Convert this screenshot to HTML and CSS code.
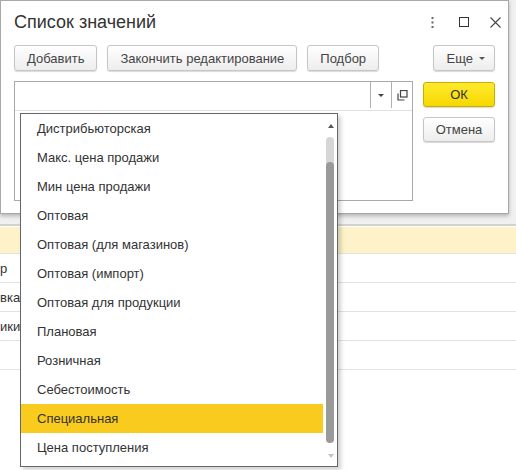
FILE: index.html
```html
<!DOCTYPE html>
<html lang="ru">
<head>
  <meta charset="UTF-8" />
  <meta name="viewport" content="width=device-width, initial-scale=1.0"/>
  <title>Список значений</title>
  <link rel="stylesheet" href="styles.css">
</head>
<body>

  <!-- Форма под диалогом -->
  <div class="form-back">
    <div class="form-head"></div>
    <div class="form-row form-row-current"><div class="form-cell"></div></div>
    <div class="form-row"><div class="form-cell cell-short">р</div></div>
    <div class="form-row"><div class="form-cell">вка</div></div>
    <div class="form-row"><div class="form-cell">ики</div></div>
    <div class="form-row"><div class="form-cell"></div></div>
  </div>

  <!-- Диалог -->
  <div class="dialog">
    <div class="dialog-title">
      <h1>Список значений</h1>
      <div class="title-icons">
        <svg class="ico-dots" width="3" height="11" viewBox="0 0 3 11">
          <rect x="0.5" y="0" width="2" height="2" fill="#666"/>
          <rect x="0.5" y="4.5" width="2" height="2" fill="#666"/>
          <rect x="0.5" y="9" width="2" height="2" fill="#666"/>
        </svg>
        <span class="ico-max"></span>
        <svg class="ico-close" width="11" height="11" viewBox="0 0 11 11">
          <path d="M0.5 0.5 L10.5 10.5 M10.5 0.5 L0.5 10.5" stroke="#444" stroke-width="1.1" fill="none"/>
        </svg>
      </div>
    </div>

    <div class="toolbar">
      <button class="btn">Добавить</button>
      <button class="btn">Закончить редактирование</button>
      <button class="btn">Подбор</button>
      <button class="btn btn-more">Еще <span class="caret"></span></button>
    </div>

    <div class="dialog-body">
      <div class="values">
        <div class="edit-row">
          <div class="edit-input"></div>
          <div class="edit-btn"><span class="caret caret-dark"></span></div>
          <div class="edit-btn">
            <svg width="11" height="11" viewBox="0 0 11 11">
              <rect x="3.5" y="0.5" width="6.5" height="6.5" fill="none" stroke="#444" stroke-width="1.2"/>
              <path d="M1 3.5 V10 H7.5" fill="none" stroke="#444" stroke-width="1.2"/>
            </svg>
          </div>
        </div>
      </div>
      <div class="side">
        <button class="btn btn-ok">ОК</button>
        <button class="btn btn-side">Отмена</button>
      </div>
    </div>
  </div>

  <!-- Выпадающий список -->
  <div class="dropdown">
    <ul class="dropdown-list">
      <li>Дистрибьюторская</li>
      <li>Макс. цена продажи</li>
      <li>Мин цена продажи</li>
      <li>Оптовая</li>
      <li>Оптовая (для магазинов)</li>
      <li>Оптовая (импорт)</li>
      <li>Оптовая для продукции</li>
      <li>Плановая</li>
      <li>Розничная</li>
      <li>Себестоимость</li>
      <li class="selected">Специальная</li>
      <li>Цена поступления</li>
    </ul>
    <div class="scroll">
      <div class="scroll-up"><span class="arrow-up"></span></div>
      <div class="scroll-track"><div class="scroll-thumb"></div></div>
      <div class="scroll-down"><span class="arrow-down"></span></div>
    </div>
  </div>

</body>
</html>
```

FILE: styles.css
```css
body {
  margin: 0;
  width: 516px;
  height: 470px;
  overflow: hidden;
  position: relative;
  font-family: "Liberation Sans", Arial, sans-serif;
  font-size: 13px;
  color: #333;
  background-color: #fff;
}

/* Форма под диалогом */
.form-head {
  height: 224px;
  background-color: #f0f0f0;
  border-bottom: 2px solid #d2d2d2;
}

.form-row {
  height: 28px;
  border-bottom: 1px solid #e2e2e2;
  display: flex;
  align-items: center;
}

.form-row-current {
  height: 26px;
  border-top: 1px solid #fff;
  background-color: #fdf2c8;
}

.form-cell {
  white-space: nowrap;
}

.cell-short {
  padding-left: 0;
}

/* Диалог */
.dialog {
  position: absolute;
  top: 0;
  left: 0;
  width: 481px;
  padding: 0 13px 12px 13px;
  background-color: #fff;
  border: 1px solid #a8a8a8;
  box-shadow: 0 2px 4px rgba(0,0,0,0.25);
}

.dialog-title {
  display: flex;
  align-items: center;
  height: 22px;
  padding-top: 10px;
}

.dialog-title h1 {
  margin: 0;
  font-size: 18px;
  line-height: 22px;
  font-weight: normal;
  color: #333;
}

.title-icons {
  margin-left: auto;
  margin-right: -6px;
  display: flex;
  align-items: center;
}

.ico-dots {
  margin-right: 25px;
}

.ico-max {
  width: 8px;
  height: 8px;
  border: 1px solid #333;
  margin-right: 21px;
}

.toolbar {
  display: flex;
  gap: 10px;
  margin-top: 12px;
}

.btn {
  height: 26px;
  padding: 0 12px;
  font-family: inherit;
  font-size: 13px;
  color: #444;
  background: linear-gradient(#fff, #ededed);
  border: 1px solid #c6c6c6;
  border-radius: 3px;
  box-shadow: 0 1px 1px rgba(0,0,0,0.15);
  cursor: pointer;
}

.btn-more {
  margin-left: auto;
  display: flex;
  align-items: center;
  gap: 6px;
  padding: 0 9px 0 13px;
}

.caret {
  display: inline-block;
  width: 0;
  height: 0;
  border-left: 3px solid transparent;
  border-right: 3px solid transparent;
  border-top: 3px solid #555;
}

.caret-dark {
  border-top-color: #444;
}

.dialog-body {
  display: flex;
  gap: 10px;
  margin-top: 10px;
}

.values {
  flex: 1;
  height: 118px;
  border: 1px solid #a9a9a9;
}

.edit-row {
  display: flex;
  height: 28px;
  border-bottom: 1px solid #e0e0e0;
}

.edit-input {
  flex: 1;
}

.edit-btn {
  width: 20px;
  margin-bottom: 2px;
  border-left: 1px solid #b0b0b0;
  display: flex;
  align-items: center;
  justify-content: center;
}

.side {
  width: 72px;
  display: flex;
  flex-direction: column;
  gap: 10px;
  padding-top: 1px;
}

.btn-ok,
.btn-side {
  height: 25px;
  padding: 0;
}

.btn-ok {
  background: linear-gradient(#ffea2e, #f6d700);
  border-color: #c9ae00;
  color: #333;
}

/* Выпадающий список */
.dropdown {
  position: absolute;
  left: 20px;
  top: 113px;
  width: 316px;
  height: 352px;
  display: flex;
  background-color: #fff;
  border: 1px solid #666;
  box-shadow: 3px 3px 4px rgba(0,0,0,0.18);
}

.dropdown-list {
  list-style: none;
  margin: 0;
  padding: 0 0 4px 0;
  width: 302px;
}

.dropdown-list li {
  height: 29px;
  line-height: 29px;
  padding-left: 16px;
  white-space: nowrap;
}

.dropdown-list li.selected {
  background-color: #f9cb1e;
}

.scroll {
  width: 14px;
  display: flex;
  flex-direction: column;
}

.scroll-up,
.scroll-down {
  display: flex;
  justify-content: center;
  padding-left: 2px;
}

.scroll-up {
  height: 23px;
  align-items: center;
}

.scroll-down {
  flex: 1;
  padding-top: 11px;
}

.arrow-up,
.arrow-down {
  width: 0;
  height: 0;
  border-left: 3px solid transparent;
  border-right: 3px solid transparent;
}

.arrow-up {
  border-bottom: 4px solid #555;
}

.arrow-down {
  border-top: 4px solid #c4c4c4;
}

.scroll-track {
  height: 281px;
  width: 8px;
  margin-left: 3px;
  padding-top: 25px;
  display: flex;
  flex-direction: column;
  background-color: #d6d6d6;
  border-radius: 4px;
}

.scroll-thumb {
  flex: 1;
  background-color: #9a9a9a;
  border-radius: 4px;
}
```
